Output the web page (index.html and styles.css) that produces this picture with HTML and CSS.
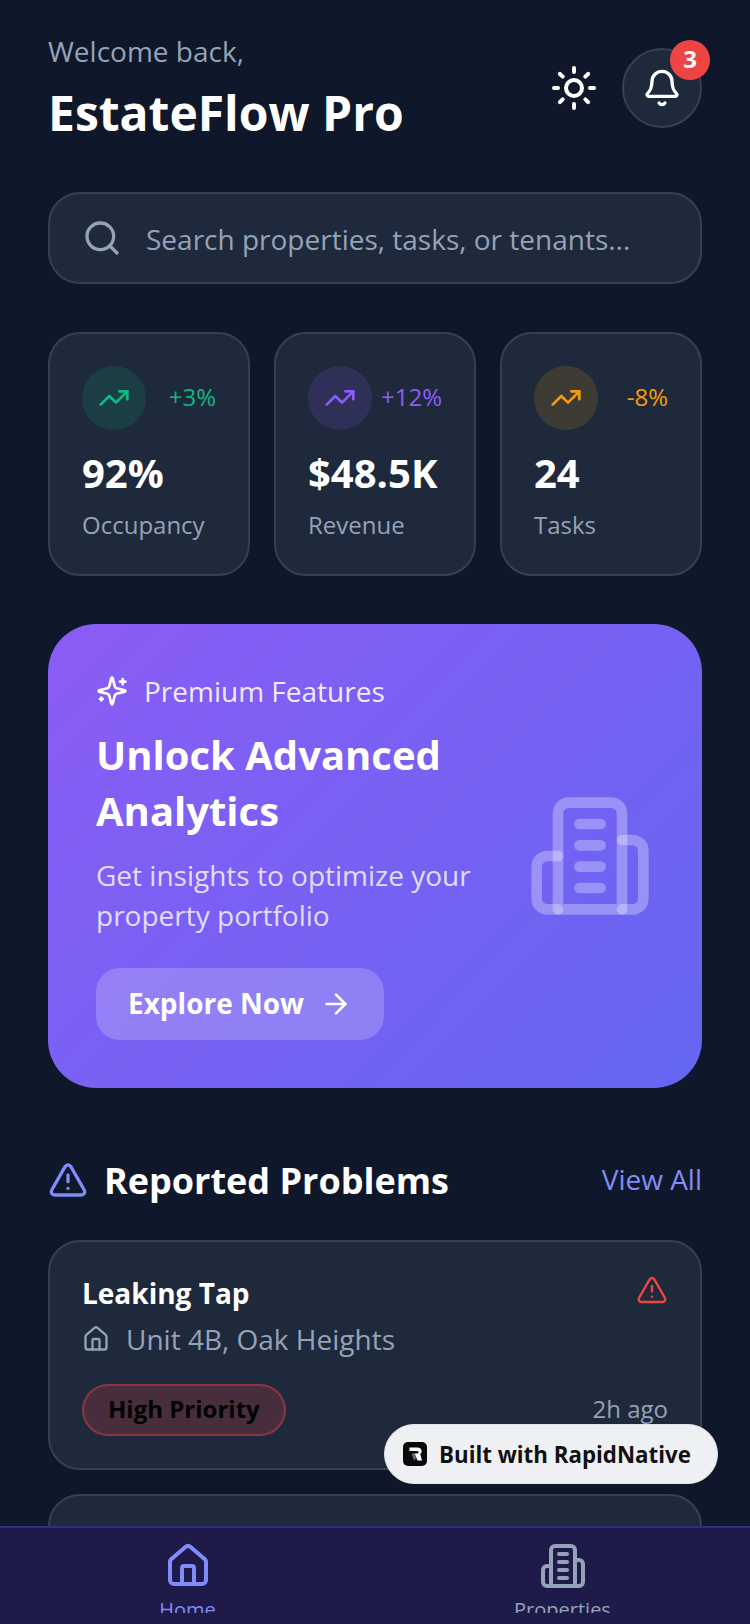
FILE: index.html
```html
<!DOCTYPE html>
<html lang="en">
<head>
<meta charset="utf-8">
<title>EstateFlow Pro</title>
<link rel="stylesheet" href="styles.css">
</head>
<body>
<svg class="defs" width="0" height="0" aria-hidden="true">
  <symbol id="trend" viewBox="0 0 24 24"><path d="M16 7h6v6"/><path d="m22 7-8.5 8.5-5-5L2 17"/></symbol>
  <symbol id="alert" viewBox="0 0 24 24"><path d="m21.73 18-8-14a2 2 0 0 0-3.48 0l-8 14A2 2 0 0 0 4 21h16a2 2 0 0 0 1.73-3"/><path d="M12 9v4"/><path d="M12 17h.01"/></symbol>
  <symbol id="home" viewBox="0 0 24 24"><path d="M15 21v-8a1 1 0 0 0-1-1h-4a1 1 0 0 0-1 1v8"/><path d="M3 10a2 2 0 0 1 .709-1.528l7-6a2 2 0 0 1 2.582 0l7 6A2 2 0 0 1 21 10v9a2 2 0 0 1-2 2H5a2 2 0 0 1-2-2z"/></symbol>
  <symbol id="building" viewBox="0 0 24 24"><path d="M6 22V4a2 2 0 0 1 2-2h8a2 2 0 0 1 2 2v18Z"/><path d="M6 12H4a2 2 0 0 0-2 2v6a2 2 0 0 0 2 2h2"/><path d="M18 9h2a2 2 0 0 1 2 2v9a2 2 0 0 1-2 2h-2"/><path d="M10 6h4"/><path d="M10 10h4"/><path d="M10 14h4"/><path d="M10 18h4"/></symbol>
</svg>
<div class="app">
  <header class="header">
    <div class="welcome">
      <p class="welcome-label">Welcome back,</p>
      <h1 class="welcome-title">EstateFlow Pro</h1>
    </div>
    <div class="header-actions">
      <svg class="icon icon-sun" viewBox="0 0 24 24"><circle cx="12" cy="12" r="4"/><path d="M12 2v2"/><path d="M12 20v2"/><path d="m4.93 4.93 1.41 1.41"/><path d="m17.66 17.66 1.41 1.41"/><path d="M2 12h2"/><path d="M20 12h2"/><path d="m6.34 17.66-1.41 1.41"/><path d="m19.07 4.93-1.41 1.41"/></svg>
      <div class="bell">
        <svg class="icon icon-bell" viewBox="0 0 24 24"><path d="M10.268 21a2 2 0 0 0 3.464 0"/><path d="M3.262 15.326A1 1 0 0 0 4 17h16a1 1 0 0 0 .74-1.673C19.41 13.956 18 12.499 18 8A6 6 0 0 0 6 8c0 4.499-1.411 5.956-2.738 7.326"/></svg>
        <span class="badge">3</span>
      </div>
    </div>
  </header>

  <div class="search">
    <svg class="icon icon-search" viewBox="0 0 24 24"><path d="m21 21-4.34-4.34"/><circle cx="11" cy="11" r="8"/></svg>
    <span class="search-text">Search properties, tasks, or tenants...</span>
  </div>

  <section class="stats">
    <article class="stat">
      <div class="stat-top">
        <span class="stat-icon stat-icon-green"><svg class="icon icon-trend"><use href="#trend"/></svg></span>
        <span class="stat-delta text-green">+3%</span>
      </div>
      <div class="stat-value">92%</div>
      <div class="stat-label">Occupancy</div>
    </article>
    <article class="stat">
      <div class="stat-top">
        <span class="stat-icon stat-icon-purple"><svg class="icon icon-trend"><use href="#trend"/></svg></span>
        <span class="stat-delta text-purple">+12%</span>
      </div>
      <div class="stat-value">$48.5K</div>
      <div class="stat-label">Revenue</div>
    </article>
    <article class="stat">
      <div class="stat-top">
        <span class="stat-icon stat-icon-amber"><svg class="icon icon-trend"><use href="#trend"/></svg></span>
        <span class="stat-delta text-amber">-8%</span>
      </div>
      <div class="stat-value">24</div>
      <div class="stat-label">Tasks</div>
    </article>
  </section>

  <section class="hero">
    <div class="hero-body">
      <div class="hero-kicker">
        <svg class="icon icon-sparkles" viewBox="0 0 24 24"><path d="M9.937 15.5A2 2 0 0 0 8.5 14.063l-6.135-1.582a.5.5 0 0 1 0-.962L8.5 9.936A2 2 0 0 0 9.937 8.5l1.582-6.135a.5.5 0 0 1 .963 0L14.063 8.5A2 2 0 0 0 15.5 9.937l6.135 1.581a.5.5 0 0 1 0 .964L15.5 14.063a2 2 0 0 0-1.437 1.437l-1.582 6.135a.5.5 0 0 1-.963 0z"/><path d="M20 3v4"/><path d="M22 5h-4"/><path d="M4 17v2"/><path d="M5 18H3"/></svg>
        <span>Premium Features</span>
      </div>
      <h2 class="hero-title">Unlock Advanced Analytics</h2>
      <p class="hero-text">Get insights to optimize your property portfolio</p>
      <div class="hero-button">
        <span class="hero-button-label">Explore Now</span>
        <svg class="icon icon-arrow" viewBox="0 0 24 24"><path d="M5 12h14"/><path d="m12 5 7 7-7 7"/></svg>
      </div>
    </div>
    <svg class="icon icon-hero"><use href="#building"/></svg>
  </section>

  <div class="section-head">
    <div class="section-title">
      <svg class="icon icon-section"><use href="#alert"/></svg>
      <h2>Reported Problems</h2>
    </div>
    <span class="view-all">View All</span>
  </div>

  <article class="problem">
    <div class="problem-top">
      <div>
        <h3 class="problem-title">Leaking Tap</h3>
        <div class="problem-place">
          <svg class="icon icon-place"><use href="#home"/></svg>
          <span>Unit 4B, Oak Heights</span>
        </div>
      </div>
      <svg class="icon icon-problem"><use href="#alert"/></svg>
    </div>
    <div class="problem-bottom">
      <span class="pill">High Priority</span>
      <span class="problem-time">2h ago</span>
    </div>
  </article>
  <article class="problem problem-next"></article>

  <nav class="nav">
    <div class="nav-item nav-active">
      <svg class="icon icon-nav"><use href="#home"/></svg>
      <span>Home</span>
    </div>
    <div class="nav-item">
      <svg class="icon icon-nav"><use href="#building"/></svg>
      <span>Properties</span>
    </div>
  </nav>

  <div class="built">
    <svg class="built-logo" viewBox="0 0 24 24"><rect width="24" height="24" rx="5" fill="#0a0a0a"/><path d="M6.500 5.500h8.500a3.800 3.800 0 0 1 2.300 6.800L19 18.500h-4.500l-3-7h2.800a1.300 1.300 0 0 0 0-2.600H6.500Z" fill="#fff"/><path d="M8.500 11.500h3l1.800 4.200-2.300 3Z" fill="#6b6b6b"/></svg>
    <span>Built with RapidNative</span>
  </div>
</div>
</body>
</html>
```
FILE: styles.css
```css
* { box-sizing: border-box; }
html, body { margin: 0; padding: 0; }
body {
  width: 750px;
  height: 1624px;
  overflow: hidden;
  background: #0f172a;
  font-family: "Open Sans", "Noto Sans", sans-serif;
  color: #fff;
}
h1, h2, h3, p { margin: 0; }
.defs { position: absolute; }
.app {
  position: relative;
  width: 750px;
  height: 1624px;
  overflow: hidden;
  padding: 31px 48px 0;
  background: #0f172a;
}
.icon {
  display: block;
  flex: none;
  fill: none;
  stroke: currentColor;
  stroke-width: 2;
  stroke-linecap: round;
  stroke-linejoin: round;
}

/* header */
.header {
  display: flex;
  justify-content: space-between;
  align-items: center;
  height: 114px;
  margin-bottom: 47px;
}
.welcome-label { font-size: 28px; line-height: 40px; color: #94a3b8; }
.welcome-title { font-size: 48px; line-height: 64px; font-weight: 700; margin-top: 10px; }
.header-actions { display: flex; align-items: center; gap: 24px; }
.icon-sun { width: 48px; height: 48px; color: #fff; margin-top: -1px; }
.bell {
  position: relative;
  width: 80px;
  height: 80px;
  border-radius: 50%;
  background: #1e293b;
  border: 2px solid #334155;
  display: flex;
  align-items: center;
  justify-content: center;
}
.icon-bell { width: 40px; height: 40px; color: #fff; }
.badge {
  position: absolute;
  top: -10px;
  right: -10px;
  width: 40px;
  height: 40px;
  padding-bottom: 4px;
  border-radius: 50%;
  background: #ef4444;
  color: #fff;
  font-size: 24px;
  font-weight: 700;
  display: flex;
  align-items: center;
  justify-content: center;
}

/* search */
.search {
  display: flex;
  align-items: center;
  gap: 24px;
  height: 92px;
  padding: 0 32px;
  background: #1e293b;
  border: 2px solid #334155;
  border-radius: 32px;
  margin-bottom: 48px;
}
.icon-search { width: 40px; height: 40px; color: #94a3b8; }
.search-text { font-size: 28px; color: #94a3b8; padding-top: 2px; }

/* stats */
.stats { display: flex; gap: 24px; margin-bottom: 48px; }
.stat {
  flex: 1 1 0;
  height: 244px;
  padding: 32px;
  background: #1e293b;
  border: 2px solid #334155;
  border-radius: 32px;
}
.stat-top { display: flex; justify-content: space-between; align-items: center; height: 64px; margin-bottom: 15px; }
.stat-icon { width: 64px; height: 64px; border-radius: 50%; display: flex; align-items: center; justify-content: center; }
.stat-icon-green { background: rgba(16, 185, 129, 0.15); color: #10b981; }
.stat-icon-purple { background: rgba(139, 92, 246, 0.15); color: #8b5cf6; }
.stat-icon-amber { background: rgba(245, 158, 11, 0.15); color: #f59e0b; }
.icon-trend { width: 32px; height: 32px; }
.stat-delta { font-size: 24px; padding-bottom: 4px; }
.text-green { color: #10b981; }
.text-purple { color: #8b5cf6; }
.text-amber { color: #f59e0b; }
.stat-value { font-size: 40px; line-height: 56px; font-weight: 700; }
.stat-label { font-size: 24px; line-height: 34px; color: #94a3b8; margin-top: 7px; }

/* hero */
.hero {
  display: flex;
  align-items: center;
  justify-content: space-between;
  height: 464px;
  padding: 48px;
  border-radius: 48px;
  background: linear-gradient(135deg, #8b5cf6, #6366f1);
  margin-bottom: 64px;
}
.hero-body { width: 400px; }
.hero-kicker { display: flex; align-items: center; gap: 16px; margin-top: -1px; font-size: 28px; line-height: 40px; color: rgba(255,255,255,.9); }
.icon-sparkles { width: 32px; height: 32px; color: #fff; }
.hero-title { font-size: 40px; line-height: 56px; font-weight: 700; margin-top: 16px; }
.hero-text { font-size: 28px; line-height: 40px; color: rgba(255,255,255,.8); margin-top: 16px; }
.hero-button {
  display: inline-flex;
  align-items: center;
  gap: 16px;
  height: 72px;
  padding: 0 32px;
  margin-top: 33px;
  border-radius: 24px;
  background: rgba(255,255,255,.2);
  font-size: 28px;
  font-weight: 700;
  white-space: nowrap;
}
.hero-button-label { padding-bottom: 2px; }
.icon-arrow { width: 32px; height: 32px; }
.icon-hero { width: 128px; height: 128px; color: rgba(255,255,255,.3); }

/* section */
.section-head { display: flex; justify-content: space-between; align-items: center; height: 56px; margin-bottom: 32px; }
.section-title { display: flex; align-items: center; gap: 16px; }
.section-title h2 { font-size: 36px; line-height: 48px; font-weight: 700; padding-top: 2px; }
.icon-section { width: 40px; height: 40px; color: #818cf8; }
.view-all { font-size: 28px; color: #818cf8; padding-bottom: 2px; }

/* problem */
.problem {
  height: 230px;
  padding: 31px 32px 32px;
  background: #1e293b;
  border: 2px solid #334155;
  border-radius: 32px;
  margin-bottom: 24px;
}
.problem-top { display: flex; justify-content: space-between; align-items: flex-start; }
.problem-title { font-size: 28px; line-height: 40px; font-weight: 700; }
.problem-place { display: flex; align-items: center; gap: 16px; font-size: 28px; line-height: 40px; color: #94a3b8; margin-top: 6px; }
.icon-place { width: 28px; height: 28px; }
.icon-problem { width: 32px; height: 32px; color: #ef4444; margin-top: 1px; stroke-width: 1.8; }
.problem-bottom { display: flex; justify-content: space-between; align-items: center; margin-top: 25px; }
.pill {
  height: 52px;
  padding: 0 24px 4px;
  border-radius: 26px;
  background: rgba(239, 68, 68, 0.2);
  border: 2px solid rgba(239, 68, 68, 0.4);
  color: #000;
  font-size: 24px;
  font-weight: 700;
  display: flex;
  align-items: center;
}
.problem-time { font-size: 24px; color: #94a3b8; padding-bottom: 4px; }

/* nav */
.nav {
  position: absolute;
  left: 0;
  right: 0;
  bottom: 0;
  height: 98px;
  display: flex;
  background: #1e1b4b;
  border-top: 2px solid #312e81;
}
.nav-item {
  flex: 1 1 0;
  display: flex;
  flex-direction: column;
  align-items: center;
  height: 85px;
  overflow: hidden;
  padding-top: 14px;
  color: #94a3b8;
  font-size: 20px;
  line-height: 28px;
}
.nav-active { color: #818cf8; }
.icon-nav { width: 48px; height: 48px; margin-bottom: 6px; }

/* floating */
.built {
  position: absolute;
  left: 384px;
  top: 1424px;
  width: 334px;
  height: 60px;
  display: flex;
  align-items: center;
  gap: 12px;
  padding: 0 18px;
  border-radius: 30px;
  background: #eef0f3;
  border: 1px solid #e2e5ea;
  color: #111;
  font-size: 22.3px;
  font-weight: 700;
  white-space: nowrap;
}
.built-logo { width: 24px; height: 24px; flex: none; }
```
